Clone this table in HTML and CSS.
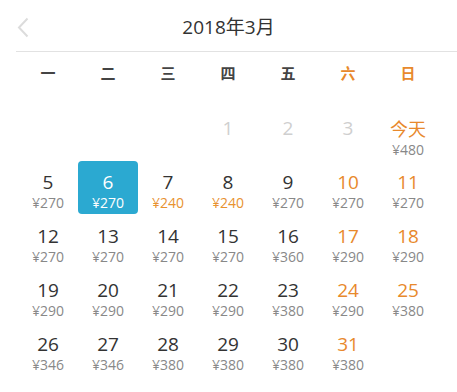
FILE: index.html
```html
<!DOCTYPE html>
<html lang="zh">
<head>
<meta charset="utf-8">
<link rel="stylesheet" href="styles.css">
</head>
<body>
<div class="cal">
  <div class="header">
    <svg class="back" width="12" height="21" viewBox="0 0 12 21"><path d="M10.5 1.5 L2 10.5 L10.5 19.5" fill="none" stroke="#dcdcdc" stroke-width="2"/></svg>
    <div class="title">2018年3月</div>
  </div>
  <div class="weekdays">
    <div>一</div><div>二</div><div>三</div><div>四</div><div>五</div><div class="we">六</div><div class="we">日</div>
  </div>
  <div class="grid">
    <div class="cell"></div><div class="cell"></div><div class="cell"></div>
    <div class="cell past"><span class="n">1</span></div>
    <div class="cell past"><span class="n">2</span></div>
    <div class="cell past"><span class="n">3</span></div>
    <div class="cell we today"><span class="n">今天</span><span class="p">¥480</span></div>

    <div class="cell"><span class="n">5</span><span class="p">¥270</span></div>
    <div class="cell sel"><span class="n">6</span><span class="p">¥270</span></div>
    <div class="cell"><span class="n">7</span><span class="p low">¥240</span></div>
    <div class="cell"><span class="n">8</span><span class="p low">¥240</span></div>
    <div class="cell"><span class="n">9</span><span class="p">¥270</span></div>
    <div class="cell we"><span class="n">10</span><span class="p">¥270</span></div>
    <div class="cell we"><span class="n">11</span><span class="p">¥270</span></div>

    <div class="cell"><span class="n">12</span><span class="p">¥270</span></div>
    <div class="cell"><span class="n">13</span><span class="p">¥270</span></div>
    <div class="cell"><span class="n">14</span><span class="p">¥270</span></div>
    <div class="cell"><span class="n">15</span><span class="p">¥270</span></div>
    <div class="cell"><span class="n">16</span><span class="p">¥360</span></div>
    <div class="cell we"><span class="n">17</span><span class="p">¥290</span></div>
    <div class="cell we"><span class="n">18</span><span class="p">¥290</span></div>

    <div class="cell"><span class="n">19</span><span class="p">¥290</span></div>
    <div class="cell"><span class="n">20</span><span class="p">¥290</span></div>
    <div class="cell"><span class="n">21</span><span class="p">¥290</span></div>
    <div class="cell"><span class="n">22</span><span class="p">¥290</span></div>
    <div class="cell"><span class="n">23</span><span class="p">¥380</span></div>
    <div class="cell we"><span class="n">24</span><span class="p">¥290</span></div>
    <div class="cell we"><span class="n">25</span><span class="p">¥380</span></div>

    <div class="cell"><span class="n">26</span><span class="p">¥346</span></div>
    <div class="cell"><span class="n">27</span><span class="p">¥346</span></div>
    <div class="cell"><span class="n">28</span><span class="p">¥380</span></div>
    <div class="cell"><span class="n">29</span><span class="p">¥380</span></div>
    <div class="cell"><span class="n">30</span><span class="p">¥380</span></div>
    <div class="cell we"><span class="n">31</span><span class="p">¥380</span></div>
  </div>
</div>
</body>
</html>
```
FILE: styles.css
```css
html, body {
  margin: 0;
  padding: 0;
  background: #fff;
}
.cal {
  width: 457px;
  height: 392px;
  overflow: hidden;
  font-family: "Open Sans", "Noto Sans CJK SC", sans-serif;
  color: #333;
}
.header {
  position: relative;
  height: 51px;
  margin-left: 16px;
  border-bottom: 1px solid #e2e2e2;
  display: flex;
  align-items: center;
  justify-content: center;
}
.back {
  position: absolute;
  left: 1px;
  top: 17px;
}
.title {
  font-size: 19px;
  color: #333;
  margin-left: -16px;
  margin-top: 1px;
}
.weekdays {
  display: grid;
  grid-template-columns: repeat(7, 60px);
  padding-left: 18px;
  height: 40px;
  align-items: center;
  font-family: "Noto Sans CJK SC", sans-serif;
  font-size: 15px;
  font-weight: bold;
  color: #444;
  text-align: center;
}
.weekdays .we {
  color: #e8892c;
}
.grid {
  display: grid;
  grid-template-columns: repeat(7, 60px);
  grid-auto-rows: 53px;
  row-gap: 1px;
  padding-left: 18px;
  margin-top: 15px;
}
.cell {
  display: flex;
  flex-direction: column;
  align-items: center;
  padding-top: 10px;
  box-sizing: border-box;
  text-align: center;
}
.n {
  font-size: 19px;
  line-height: 22px;
  color: #333;
}
.p {
  font-size: 14px;
  line-height: 20px;
  color: #888;
}
.p.low {
  color: #e8922f;
}
.cell.we .n {
  color: #e8892c;
}
.cell.today {
  padding-top: 9px;
}
.cell.today .n {
  font-size: 18px;
  line-height: 26px;
}
.cell.today .p {
  line-height: 16px;
}
.cell.past .n {
  color: #cfcfcf;
}
.cell.sel {
  background: #2ba9d1;
  border-radius: 4px;
  width: 60px;
}
.cell.sel .n,
.cell.sel .p {
  color: #fff;
}
```
